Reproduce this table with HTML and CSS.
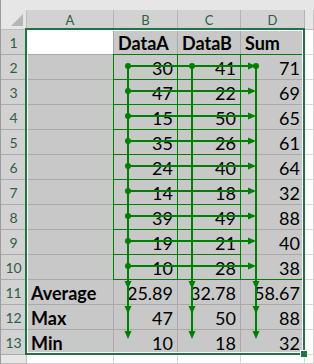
FILE: index.html
```html
<!DOCTYPE html>
<html>
<head>
<meta charset="utf-8">
<link rel="stylesheet" href="styles.css">
</head>
<body>
<div class="page">
  <div class="sheet">
    <div class="topbar"></div>
    <div class="corner"><span class="tri"></span></div>
    <div class="colhdr sel">A</div>
    <div class="colhdr sel">B</div>
    <div class="colhdr sel">C</div>
    <div class="colhdr sel">D</div>
    <div class="colhdr"></div>

    <div class="rowhdr sel">1</div>
    <div class="cell active"></div>
    <div class="cell sel bold">DataA</div>
    <div class="cell sel bold">DataB</div>
    <div class="cell sel bold">Sum</div>
    <div class="cell out"></div>

    <div class="rowhdr sel">2</div><div class="cell sel"></div><div class="cell sel num">30</div><div class="cell sel num">41</div><div class="cell sel num">71</div><div class="cell out"></div>
    <div class="rowhdr sel">3</div><div class="cell sel"></div><div class="cell sel num">47</div><div class="cell sel num">22</div><div class="cell sel num">69</div><div class="cell out"></div>
    <div class="rowhdr sel">4</div><div class="cell sel"></div><div class="cell sel num">15</div><div class="cell sel num">50</div><div class="cell sel num">65</div><div class="cell out"></div>
    <div class="rowhdr sel">5</div><div class="cell sel"></div><div class="cell sel num">35</div><div class="cell sel num">26</div><div class="cell sel num">61</div><div class="cell out"></div>
    <div class="rowhdr sel">6</div><div class="cell sel"></div><div class="cell sel num">24</div><div class="cell sel num">40</div><div class="cell sel num">64</div><div class="cell out"></div>
    <div class="rowhdr sel">7</div><div class="cell sel"></div><div class="cell sel num">14</div><div class="cell sel num">18</div><div class="cell sel num">32</div><div class="cell out"></div>
    <div class="rowhdr sel">8</div><div class="cell sel"></div><div class="cell sel num">39</div><div class="cell sel num">49</div><div class="cell sel num">88</div><div class="cell out"></div>
    <div class="rowhdr sel">9</div><div class="cell sel"></div><div class="cell sel num">19</div><div class="cell sel num">21</div><div class="cell sel num">40</div><div class="cell out"></div>
    <div class="rowhdr sel">10</div><div class="cell sel"></div><div class="cell sel num">10</div><div class="cell sel num">28</div><div class="cell sel num">38</div><div class="cell out"></div>
    <div class="rowhdr sel">11</div><div class="cell sel bold">Average</div><div class="cell sel num">25.89</div><div class="cell sel num">32.78</div><div class="cell sel num">58.67</div><div class="cell out"></div>
    <div class="rowhdr sel">12</div><div class="cell sel bold">Max</div><div class="cell sel num">47</div><div class="cell sel num">50</div><div class="cell sel num">88</div><div class="cell out"></div>
    <div class="rowhdr sel">13</div><div class="cell sel bold">Min</div><div class="cell sel num">10</div><div class="cell sel num">18</div><div class="cell sel num">32</div><div class="cell out"></div>

    <div class="rowhdr"></div><div class="cell out"></div><div class="cell out"></div><div class="cell out"></div><div class="cell out"></div><div class="cell out"></div>
  </div>

  <svg class="overlay" width="314" height="364" viewBox="0 0 314 364">
    <g fill="none" stroke="#008000" stroke-width="1">
      <path d="M113.5 54V280 M177.5 54V280 M240.5 54V280"/>
      <path d="M113 54.5H305 M113 279.5H305"/>
      <path d="M113 79.5H241 M113 104.5H241 M113 129.5H241 M113 154.5H241 M113 179.5H241 M113 204.5H241 M113 229.5H241 M113 254.5H241"/>
    </g>
    <g fill="none" stroke="#008000" stroke-width="2">
      <path d="M128 66H249 M128 91H249 M128 116H249 M128 141H249 M128 166H249 M128 191H249 M128 216H249 M128 241H249 M128 266H249"/>
      <path d="M128 66V334 M192 66V334 M256 66V334"/>
    </g>
    <g fill="#008000">
      <path d="M248 62.5L256 66L248 69.5Z M248 87.5L256 91L248 94.5Z M248 112.5L256 116L248 119.5Z M248 137.5L256 141L248 144.5Z M248 162.5L256 166L248 169.5Z M248 187.5L256 191L248 194.5Z M248 212.5L256 216L248 219.5Z M248 237.5L256 241L248 244.5Z M248 262.5L256 266L248 269.5Z"/>
      <path d="M124.5 281L131.5 281L128 289Z M124.5 306L131.5 306L128 314Z M124.5 331L131.5 331L128 339Z"/>
      <path d="M188.5 281L195.5 281L192 289Z M188.5 306L195.5 306L192 314Z M188.5 331L195.5 331L192 339Z"/>
      <path d="M252.5 281L259.5 281L256 289Z M252.5 306L259.5 306L256 314Z M252.5 331L259.5 331L256 339Z"/>
      <circle cx="128" cy="66" r="3"/><circle cx="128" cy="91" r="3"/><circle cx="128" cy="116" r="3"/>
      <circle cx="128" cy="141" r="3"/><circle cx="128" cy="166" r="3"/><circle cx="128" cy="191" r="3"/>
      <circle cx="128" cy="216" r="3"/><circle cx="128" cy="241" r="3"/><circle cx="128" cy="266" r="3"/>
      <circle cx="192" cy="66" r="3"/><circle cx="256" cy="66" r="3"/>
    </g>
    <rect x="27.5" y="30.5" width="275" height="322" fill="none" stroke="#ffffff" stroke-width="1"/>
    <rect x="26" y="29" width="278" height="325" fill="none" stroke="#217346" stroke-width="2"/>
    <rect x="300.5" y="350.5" width="7" height="7" fill="#217346" stroke="#ffffff" stroke-width="1"/>
  </svg>
</div>
</body>
</html>
```

FILE: styles.css
```css
html, body {
  margin: 0;
  padding: 0;
  background: #ffffff;
  overflow: hidden;
}

.page {
  position: relative;
  width: 314px;
  height: 364px;
  overflow: hidden;
}

.sheet {
  display: grid;
  grid-template-columns: 26px 87px 64px 63px 64px 1fr;
  grid-template-rows: 10px 20px repeat(13, 25px) 1fr;
  width: 313px;
  height: 364px;
  border-left: 1px solid #9c9c9c;
  font-family: Lato, "Open Sans", sans-serif;
}

.sheet > div {
  box-sizing: border-box;
}

.topbar {
  grid-column: 1 / -1;
  background: #e6e6e6;
}

.corner {
  background: #e6e6e6;
  border-right: 1px solid #bdbdbd;
  border-bottom: 1px solid #bdbdbd;
  display: flex;
  align-items: flex-end;
  justify-content: flex-end;
  padding: 0 3px 3px 0;
}

.tri {
  width: 0;
  height: 0;
  border-left: 12px solid transparent;
  border-bottom: 12px solid #b5b5b5;
}

.colhdr {
  background: #e6e6e6;
  border-right: 1px solid #c6c6c6;
  border-bottom: 1px solid #bdbdbd;
  display: flex;
  align-items: center;
  justify-content: center;
  font-size: 13px;
  color: #444444;
}

.colhdr.sel {
  background: #d2d2d2;
  color: #2f5d48;
  border-right-color: #b4b4b4;
}

.rowhdr {
  background: #e6e6e6;
  border-right: 1px solid #bdbdbd;
  border-bottom: 1px solid #bdbdbd;
  display: flex;
  align-items: center;
  justify-content: center;
  font-size: 14px;
  color: #444444;
}

.rowhdr.sel {
  background: #d2d2d2;
  color: #2f5d48;
  border-bottom-color: #ababab;
}

.cell {
  border-right: 1px solid #d4d4d4;
  border-bottom: 1px solid #d4d4d4;
  display: flex;
  align-items: flex-end;
  padding: 0 4px 1px 4px;
  font-size: 18px;
  line-height: 20px;
  color: #000000;
  white-space: nowrap;
  overflow: hidden;
}

.cell.sel {
  background: #c8c8c8;
  border-right-color: #a9a9a9;
  border-bottom-color: #a9a9a9;
}

.cell.active {
  background: #ffffff;
  border-right-color: #a9a9a9;
  border-bottom-color: #a9a9a9;
}

.cell.out {
  background: #ffffff;
}

.bold {
  font-weight: 700;
}

.num {
  justify-content: flex-end;
}

.overlay {
  position: absolute;
  left: 0;
  top: 0;
  pointer-events: none;
}
```
